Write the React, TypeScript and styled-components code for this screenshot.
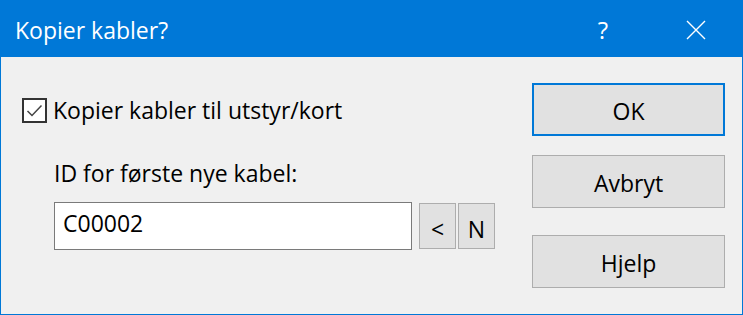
import styled, { createGlobalStyle } from "styled-components";

const GlobalStyle = createGlobalStyle`
  html, body {
    margin: 0;
    padding: 0;
    background: #f0f0f0;
  }
  body {
    font-family: "Open Sans", "Noto Sans", "Liberation Sans", sans-serif;
    color: #000;
  }
`;

const Window = styled.div`
  width: 743px;
  height: 315px;
  box-sizing: border-box;
  border: 1px solid #0078d7;
  border-top: none;
  background: #f0f0f0;
  display: flex;
  flex-direction: column;
`;

const TitleBar = styled.div`
  height: 57px;
  flex: none;
  margin: 0 -1px;
  background: #0078d7;
  color: #fff;
  display: flex;
  align-items: center;
  padding: 2px 0 0 15px;
  box-sizing: border-box;
`;

const Title = styled.div`
  flex: 1;
  font-size: 23px;
`;

const CaptionButton = styled.div<{ $gap: number }>`
  width: 46px;
  height: 54px;
  display: flex;
  align-items: center;
  justify-content: center;
  font-size: 24px;
  margin-right: ${({ $gap }) => $gap}px;
`;

const Body = styled.div`
  flex: 1;
  display: flex;
  padding: 26px 17px 0 21px;
`;

const LeftColumn = styled.div`
  flex: 1;
  display: flex;
  flex-direction: column;
`;

const CheckRow = styled.label`
  display: flex;
  align-items: center;
  gap: 6px;
  margin-top: 14px;
  height: 26px;
  font-size: 23px;
`;

const CheckBox = styled.span`
  width: 25px;
  height: 25px;
  box-sizing: border-box;
  border: 2px solid #333;
  background: #fff;
  display: flex;
  align-items: center;
  justify-content: center;
  flex: none;
`;

const FieldLabel = styled.div`
  margin: 35px 0 0 32px;
  font-size: 23px;
  line-height: 30px;
`;

const InputRow = styled.div`
  display: flex;
  align-items: center;
  margin: 14px 0 0 32px;
`;

const TextInput = styled.div`
  width: 358px;
  height: 48px;
  box-sizing: border-box;
  border: 1px solid #7a7a7a;
  background: #fff;
  padding: 5px 0 0 8px;
  font-size: 23px;
  line-height: 30px;
`;

const SmallButton = styled.div<{ $gap: number }>`
  width: 37px;
  height: 46px;
  box-sizing: border-box;
  border: 1px solid #adadad;
  background: #e1e1e1;
  display: flex;
  align-items: center;
  justify-content: center;
  padding-top: 6px;
  font-size: 23px;
  margin-left: ${({ $gap }) => $gap}px;
`;

const ButtonColumn = styled.div`
  width: 193px;
  display: flex;
  flex-direction: column;
  gap: 19px;
`;

const DialogButton = styled.div<{ $default?: boolean; $extra?: number }>`
  height: 53px;
  box-sizing: border-box;
  border: ${({ $default }) => ($default ? "2px solid #0078d7" : "1px solid #adadad")};
  background: #e1e1e1;
  display: flex;
  align-items: center;
  justify-content: center;
  padding-top: 3px;
  font-size: 23px;
  margin-top: ${({ $extra }) => $extra ?? 0}px;
`;

export default function App() {
  return (
    <>
      <GlobalStyle />
      <Window>
        <TitleBar>
          <Title>Kopier kabler?</Title>
          <CaptionButton $gap={47}>?</CaptionButton>
          <CaptionButton $gap={24}>
            <svg width="20" height="20" viewBox="0 0 20 20">
              <path d="M1 1 L19 19 M19 1 L1 19" stroke="#fff" strokeWidth="1.4" />
            </svg>
          </CaptionButton>
        </TitleBar>
        <Body>
          <LeftColumn>
            <CheckRow>
              <CheckBox>
                <svg width="19" height="19" viewBox="0 0 19 19">
                  <path d="M2.5 10 L7 14.5 L16.5 4.5" fill="none" stroke="#444" strokeWidth="1.5" />
                </svg>
              </CheckBox>
              Kopier kabler til utstyr/kort
            </CheckRow>
            <FieldLabel>ID for første nye kabel:</FieldLabel>
            <InputRow>
              <TextInput>C00002</TextInput>
              <SmallButton $gap={7}>&lt;</SmallButton>
              <SmallButton $gap={2}>N</SmallButton>
            </InputRow>
          </LeftColumn>
          <ButtonColumn>
            <DialogButton $default>OK</DialogButton>
            <DialogButton>Avbryt</DialogButton>
            <DialogButton $extra={8}>Hjelp</DialogButton>
          </ButtonColumn>
        </Body>
      </Window>
    </>
  );
}
